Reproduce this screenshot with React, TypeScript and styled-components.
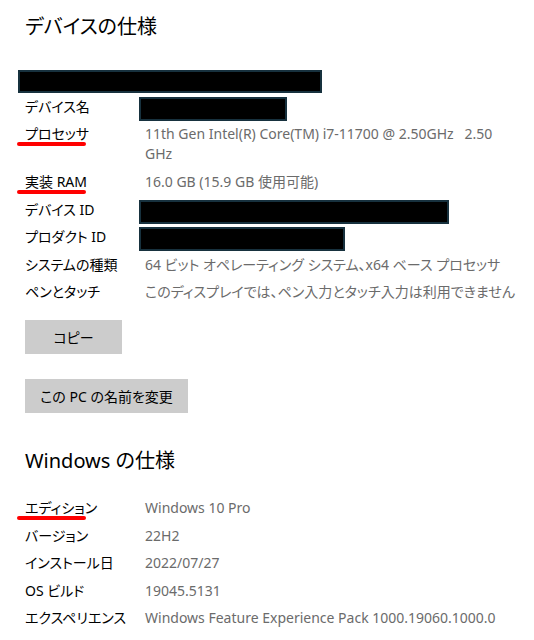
import React from "react";
import styled, { createGlobalStyle } from "styled-components";

const GlobalStyle = createGlobalStyle`
  body {
    margin: 0;
    background: #ffffff;
    font-family: "Noto Sans", "Noto Sans CJK JP", sans-serif;
    font-feature-settings: "palt";
  }
`;

const Page = styled.div`
  width: 534px;
  height: 640px;
  padding-left: 25px;
  box-sizing: border-box;
  overflow: hidden;
`;

const Title = styled.h2<{ $top: number }>`
  margin: ${(p) => p.$top}px 0 0;
  font-size: 20px;
  line-height: 28px;
  font-weight: 400;
  color: #000000;
`;

const Redacted = styled.div<{ $w: number; $h: number }>`
  width: ${(p) => p.$w}px;
  height: ${(p) => p.$h}px;
  box-sizing: border-box;
  background: #000000;
  border: 2px solid #17313e;
`;

const NameBar = styled(Redacted)`
  margin: 29px 0 0 -7px;
`;

const Specs = styled.div<{ $top: number }>`
  margin-top: ${(p) => p.$top}px;
`;

const Row = styled.div`
  display: grid;
  grid-template-columns: 120px 1fr;
  padding: 3.8px 0;
  font-size: 14px;
  line-height: 20px;
`;

const Label = styled.div<{ $marked?: boolean }>`
  position: relative;
  color: #000000;

  &::after {
    content: "";
    display: ${(p) => (p.$marked ? "block" : "none")};
    position: absolute;
    left: -8px;
    top: 18px;
    width: 69px;
    height: 4px;
    border-radius: 2px;
    background: #ff0000;
  }
`;

const Value = styled.div`
  color: #6b6b6b;
  white-space: pre;
`;

const ValueBox = styled(Redacted)`
  margin: 0 0 -4px -6px;
`;

const Button = styled.button<{ $w: number; $top: number }>`
  display: block;
  width: ${(p) => p.$w}px;
  height: 34px;
  margin-top: ${(p) => p.$top}px;
  padding: 0;
  border: none;
  background: #cccccc;
  color: #000000;
  font-family: inherit;
  font-feature-settings: inherit;
  font-size: 14px;
`;

type Spec = {
  label: string;
  value?: string;
  box?: [number, number];
  marked?: boolean;
};

const device: Spec[] = [
  { label: "デバイス名", box: [148, 24] },
  {
    label: "プロセッサ",
    value: "11th Gen Intel(R) Core(TM) i7-11700 @ 2.50GHz   2.50\nGHz",
    marked: true,
  },
  { label: "実装 RAM", value: "16.0 GB (15.9 GB 使用可能)", marked: true },
  { label: "デバイス ID", box: [310, 24] },
  { label: "プロダクト ID", box: [206, 24] },
  { label: "システムの種類", value: "64 ビット オペレーティング システム、x64 ベース プロセッサ" },
  { label: "ペンとタッチ", value: "このディスプレイでは、ペン入力とタッチ入力は利用できません" },
];

const windows: Spec[] = [
  { label: "エディション", value: "Windows 10 Pro", marked: true },
  { label: "バージョン", value: "22H2" },
  { label: "インストール日", value: "2022/07/27" },
  { label: "OS ビルド", value: "19045.5131" },
  { label: "エクスペリエンス", value: "Windows Feature Experience Pack 1000.19060.1000.0" },
];

const SpecRows = ({ items }: { items: Spec[] }) => (
  <>
    {items.map((item) => (
      <Row key={item.label}>
        <Label $marked={item.marked}>{item.label}</Label>
        {item.box ? (
          <ValueBox $w={item.box[0]} $h={item.box[1]} />
        ) : (
          <Value>{item.value}</Value>
        )}
      </Row>
    ))}
  </>
);

const App = () => (
  <Page>
    <GlobalStyle />
    <Title $top={13}>デバイスの仕様</Title>
    <NameBar $w={304} $h={23} />
    <Specs $top={0}>
      <SpecRows items={device} />
    </Specs>
    <Button $w={97} $top={14}>
      コピー
    </Button>
    <Button $w={163} $top={25}>
      この PC の名前を変更
    </Button>
    <Title $top={34}>Windows の仕様</Title>
    <Specs $top={19}>
      <SpecRows items={windows} />
    </Specs>
  </Page>
);

export default App;
